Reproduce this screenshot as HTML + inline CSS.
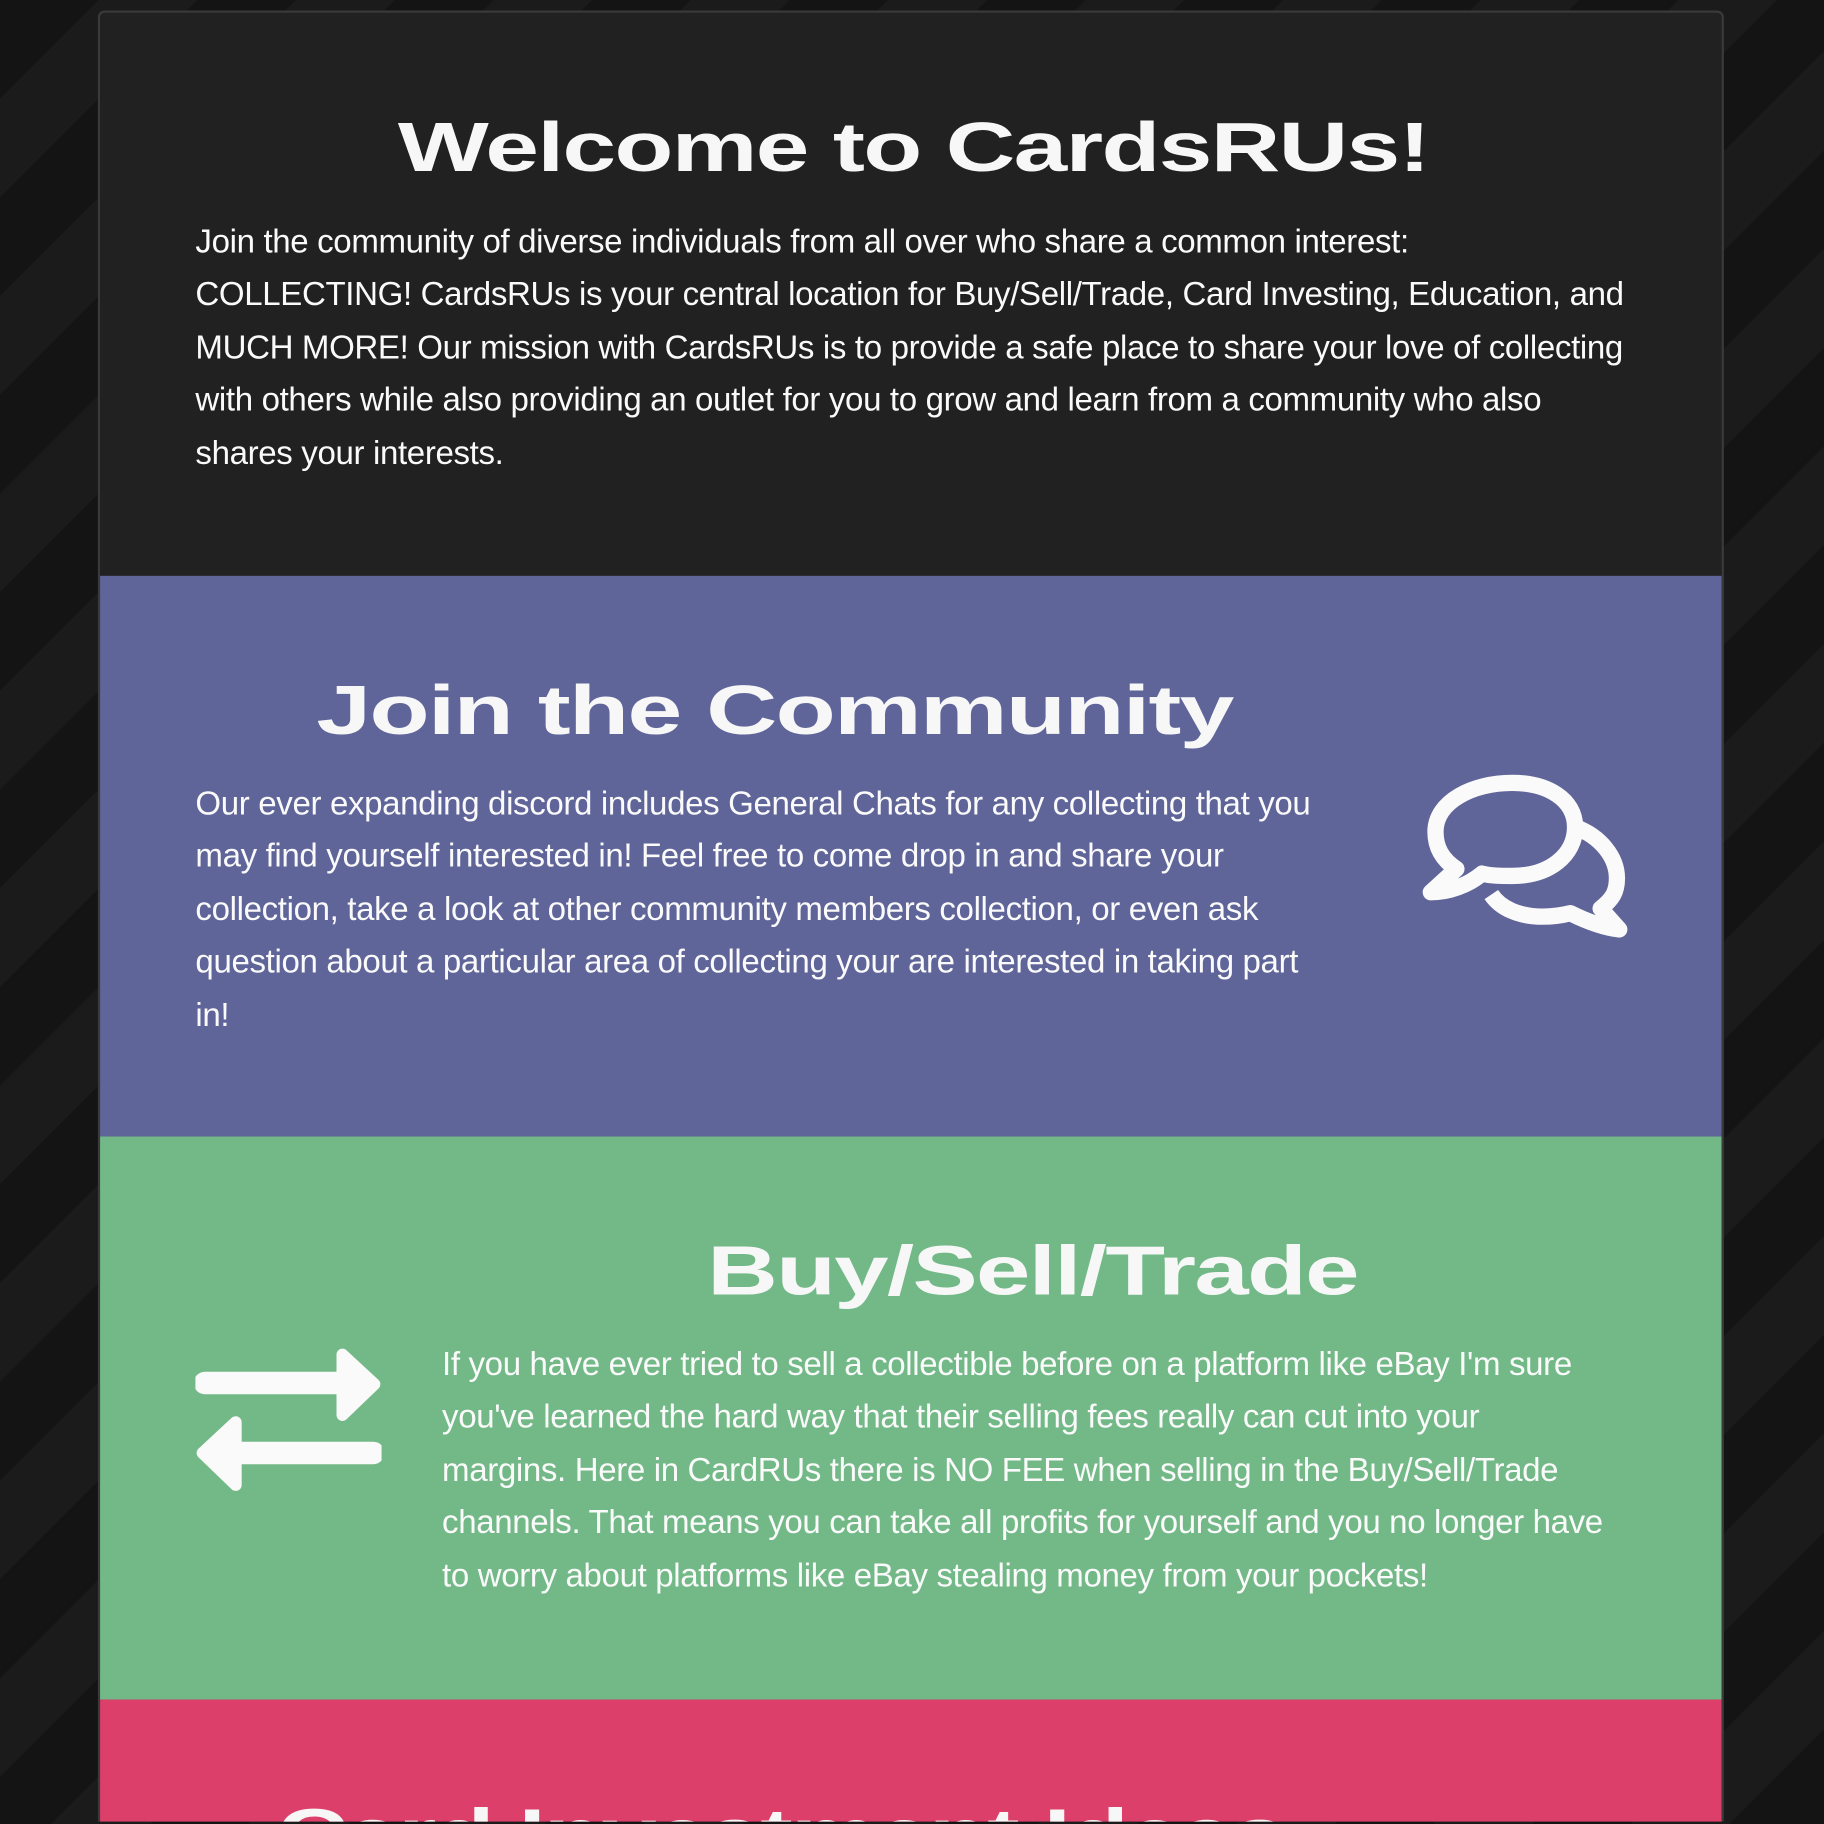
<!DOCTYPE html>
<html><head><meta charset="utf-8"><style>
html,body{margin:0;padding:0;width:1824px;height:1824px;overflow:hidden;background:#161616;}
#w{position:absolute;left:0;top:0;width:1568px;height:1568px;overflow:hidden;transform:scale(1.163265);transform-origin:0 0;
background:repeating-linear-gradient(135deg,#141414 0 60px,#1b1b1b 60px 120px);}
.card{position:absolute;left:84px;top:9px;width:1394px;height:1555px;border:2px solid #3a3a3a;border-bottom:0;border-radius:6px 6px 0 0;background:#212121;overflow:hidden;}
.sec{position:absolute;left:0;width:1394px;}
h2{margin:0;position:absolute;font-family:"Liberation Sans",sans-serif;font-weight:900;color:#f7f7f7;font-size:60px;line-height:60px;white-space:nowrap;transform-origin:0 0;letter-spacing:-1px;}
p{margin:0;position:absolute;font-family:"Liberation Sans",sans-serif;color:#fafafa;font-size:28.4px;line-height:45.4px;white-space:nowrap;letter-spacing:-0.3px;}
</style></head><body><div id="w">
<div class="card">
 <div class="sec" style="top:0;height:484px;background:#212121">
  <h2 style="left:256px;top:86px;transform:scaleX(1.38)">Welcome to CardsRUs!</h2>
  <p style="left:82px;top:175px">Join the community of diverse individuals from all over who share a common interest:<br>COLLECTING! CardsRUs is your central location for Buy/Sell/Trade, Card Investing, Education, and<br>MUCH MORE! Our mission with CardsRUs is to provide a safe place to share your love of collecting<br>with others while also providing an outlet for you to grow and learn from a community who also<br>shares your interests.</p>
 </div>
 <div class="sec" style="top:484px;height:482px;background:#5f6499">
  <h2 style="left:186px;top:86px;transform:scaleX(1.41)">Join the Community</h2>
  <p style="left:82px;top:174px">Our ever expanding discord includes General Chats for any collecting that you<br>may find yourself interested in! Feel free to come drop in and share your<br>collection, take a look at other community members collection, or even ask<br>question about a particular area of collecting your are interested in taking part<br>in!</p>
  <svg style="position:absolute;left:1134px;top:172px;overflow:visible" width="180" height="140" viewBox="0 0 180 140">
   <g fill="none" stroke="#fafafa" stroke-width="14" stroke-linejoin="round">
    <path d="M80 86 C112 86 134 68 134 44 C134 20 110 6 80 6 C46 6 14 22 14 48 C14 62 20 72 32 80 L10 100 C26 100 42 94 54 84 C62 86 70 86 80 86 Z"/>
    <path d="M134 44 C156 52 170 70 170 88 C170 100 166 106 156 114 L172 132 C156 130 142 124 130 118 C122 120 114 121 106 121 C86 121 70 114 62 102"/>
   </g>
  </svg>
 </div>
 <div class="sec" style="top:966px;height:484px;background:#72b987">
  <h2 style="left:522px;top:86px;transform:scaleX(1.40)">Buy/Sell/Trade</h2>
  <p style="left:294px;top:174px">If you have ever tried to sell a collectible before on a platform like eBay I'm sure<br>you've learned the hard way that their selling fees really can cut into your<br>margins. Here in CardRUs there is NO FEE when selling in the Buy/Sell/Trade<br>channels. That means you can take all profits for yourself and you no longer have<br>to worry about platforms like eBay stealing money from your pockets!</p>
  <svg style="position:absolute;left:82px;top:181px" width="160" height="125" viewBox="0 0 157 122">
   <g fill="#fafafa" stroke="#fafafa" stroke-width="10" stroke-linejoin="round" stroke-linecap="round">
    <line x1="8" y1="30" x2="125" y2="30" stroke-width="19"/>
    <path d="M124 6 L151 31 L124 57 Z"/>
    <line x1="35" y1="89" x2="150" y2="89" stroke-width="19"/>
    <path d="M34 63 L6 89 L34 116 Z"/>
   </g>
  </svg>
 </div>
 <div class="sec" style="top:1450px;height:200px;background:#dc3f69">
  <h2 style="left:152px;top:86px;transform:scaleX(1.40)">Card Investment Ideas</h2>
 </div>
</div>
</div></body></html>
